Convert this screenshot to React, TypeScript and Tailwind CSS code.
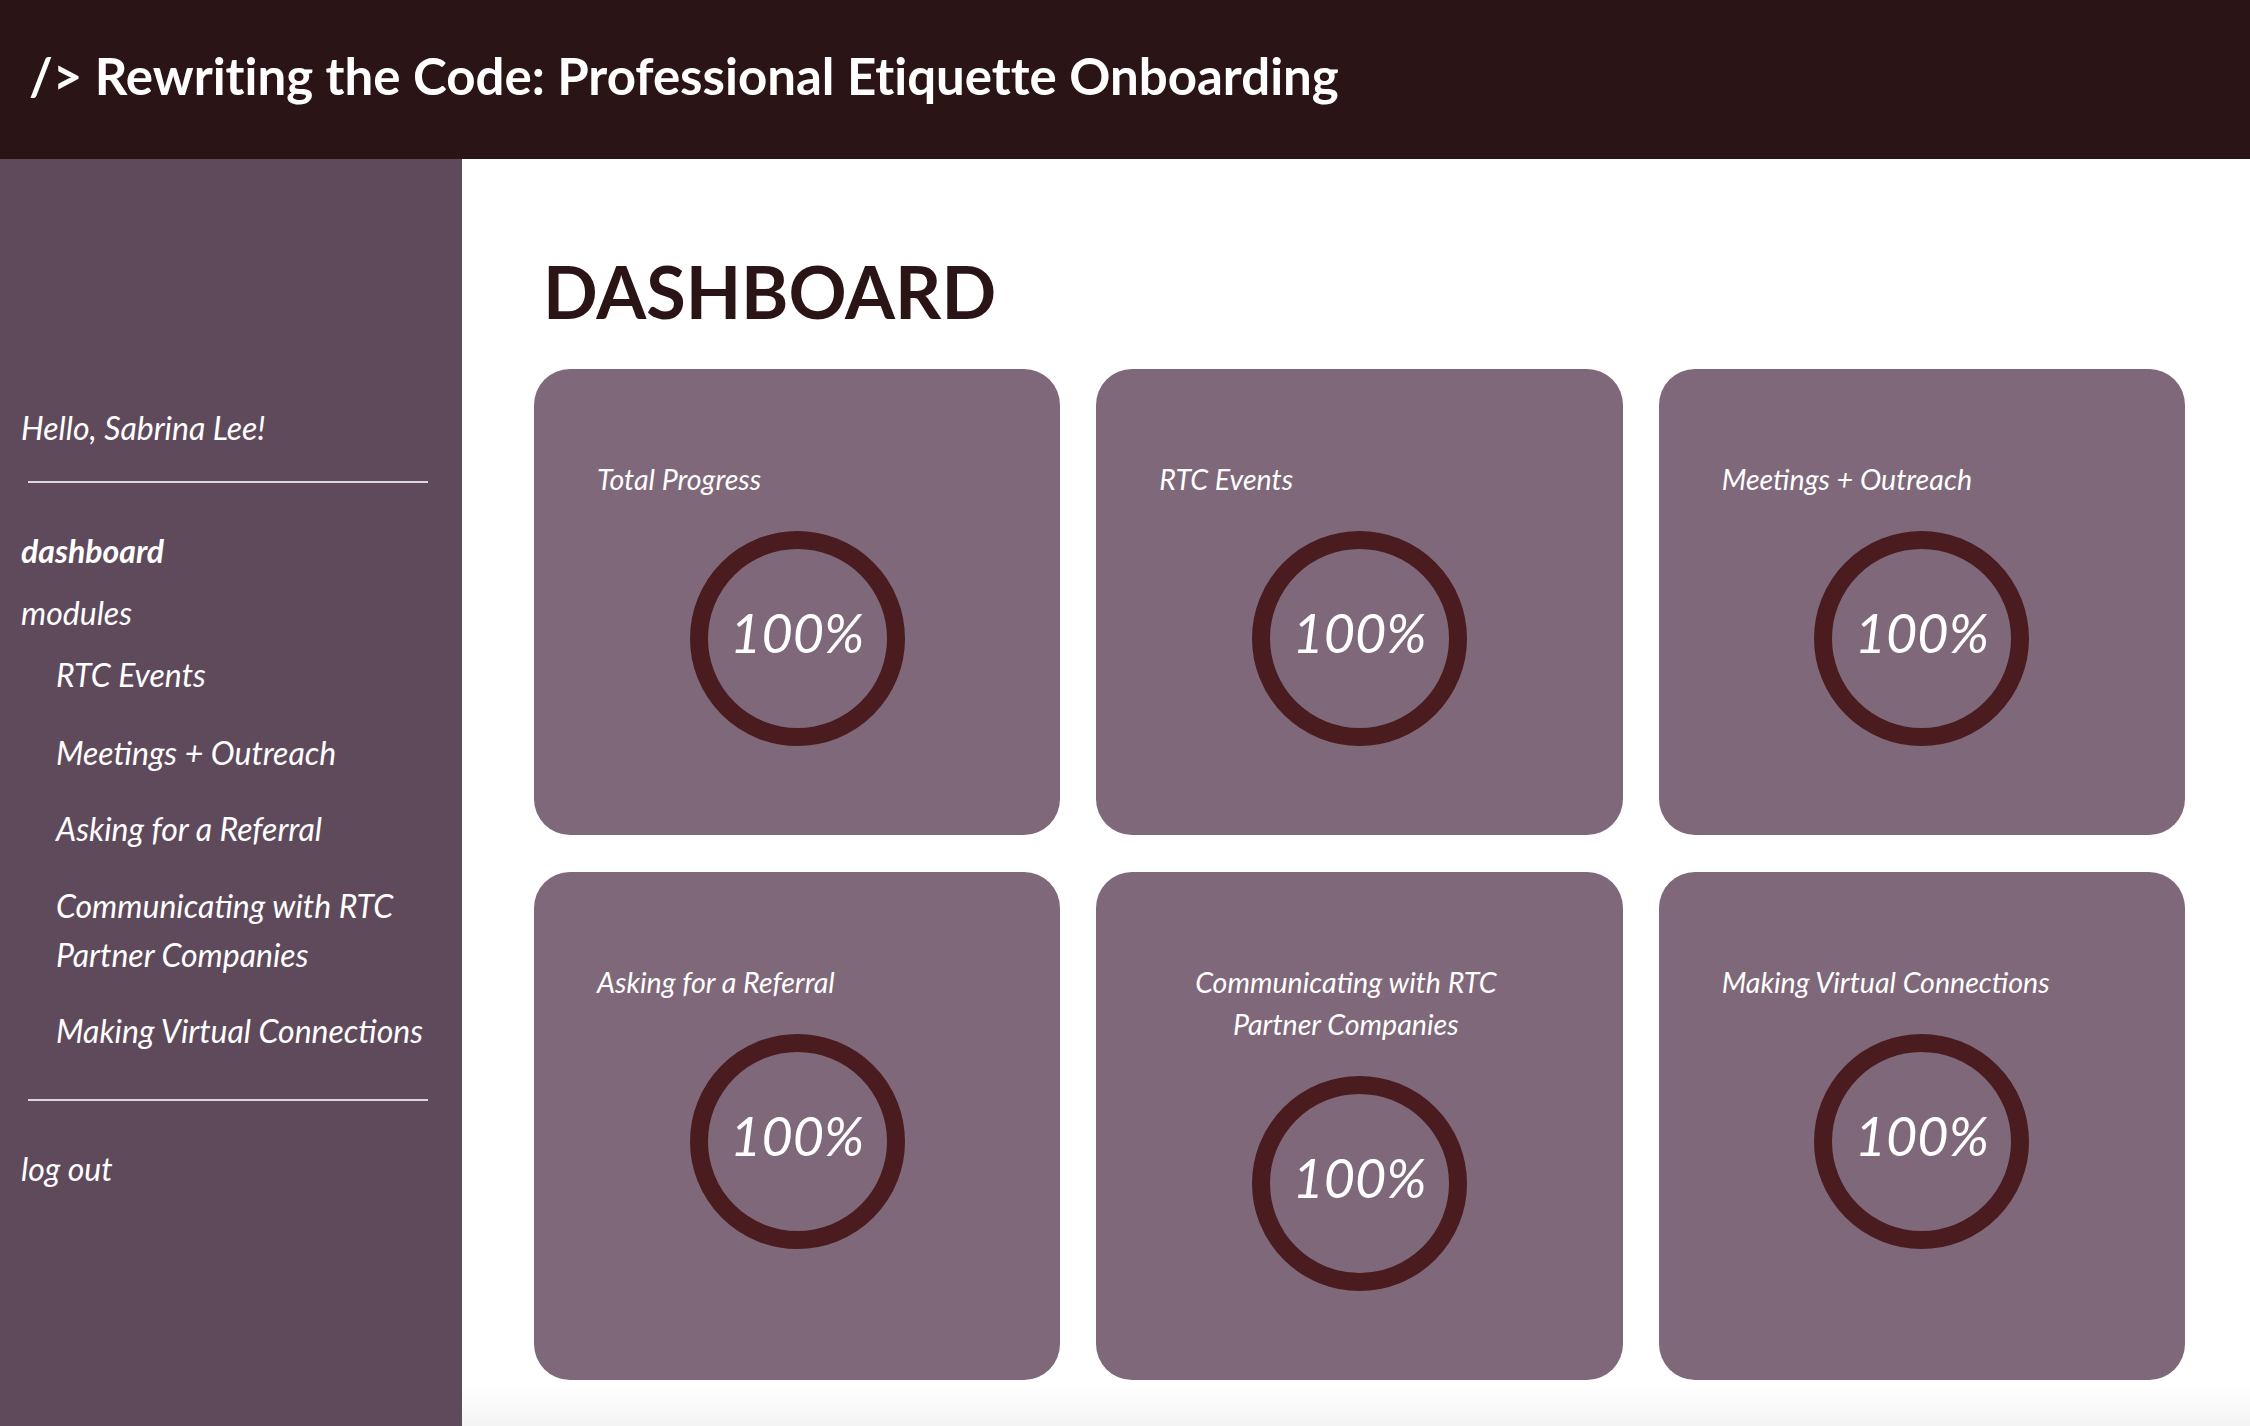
import React from "react";

const cards = [
  "Total Progress",
  "RTC Events",
  "Meetings + Outreach",
  "Asking for a Referral",
  "Communicating with RTC Partner Companies",
  "Making Virtual Connections",
];

function Card({ title }: { title: string }) {
  return (
    <div className="flex flex-col rounded-[36px] bg-[#7f6879] pt-[89px] pb-[89px]">
      <h3 className="ml-[63px] w-fit max-w-[373px] text-center text-[28.6px] italic leading-[42px] text-white">
        {title}
      </h3>
      <div className="mt-[31px] flex h-[215px] w-[215px] items-center justify-center self-center rounded-full border-[18px] border-[#4a1c1f]">
        <span className="mb-[12px] text-[54px] italic leading-none text-white">100%</span>
      </div>
    </div>
  );
}

export default function App() {
  return (
    <div className="flex h-[1426px] w-full flex-col overflow-hidden font-['Lato',sans-serif]">
      <header className="flex h-[159px] shrink-0 items-center bg-[#2a1416] pb-[8px] pl-[29px]">
        <h1 className="text-[51px] font-bold leading-none text-white [font-variant-ligatures:none]">
          /&gt; Rewriting the Code: Professional Etiquette Onboarding
        </h1>
      </header>
      <div className="flex flex-1">
        <aside className="flex w-[462px] shrink-0 flex-col bg-[#5f4a5c] px-[21px] pt-[245px] text-white">
          <p className="text-[32px] italic leading-[48px]">Hello, Sabrina Lee!</p>
          <div className="mt-[29px] ml-[7px] h-[2px] w-[400px] bg-[#ddd6db]" />
          <nav className="mt-[44px] flex flex-col text-[32px] italic">
            <a className="font-bold leading-[48px]">dashboard</a>
            <a className="mt-[14px] leading-[48px]">modules</a>
            <ul className="ml-[35px] flex flex-col">
              <li className="mt-[14px] leading-[48px]">RTC Events</li>
              <li className="mt-[30px] leading-[48px]">Meetings + Outreach</li>
              <li className="mt-[28px] leading-[48px]">Asking for a Referral</li>
              <li className="mt-[28px] leading-[49px]">Communicating with RTC Partner Companies</li>
              <li className="mt-[28px] leading-[48px]">Making Virtual Connections</li>
            </ul>
          </nav>
          <div className="mt-[44px] ml-[7px] h-[2px] w-[400px] bg-[#ddd6db]" />
          <a className="mt-[44px] text-[32px] italic leading-[48px]">log out</a>
        </aside>
        <main className="flex-1 bg-[linear-gradient(to_bottom,#ffffff_1225px,#f4f4f4_1267px)] pt-[96px] pr-[65px] pl-[72px]">
          <h2 className="pl-[9px] text-[72px] font-bold leading-none text-[#2a1416]">DASHBOARD</h2>
          <div className="mt-[42px] grid grid-cols-3 gap-x-[36px] gap-y-[37px]">
            {cards.map((c) => (
              <Card key={c} title={c} />
            ))}
          </div>
        </main>
      </div>
    </div>
  );
}
